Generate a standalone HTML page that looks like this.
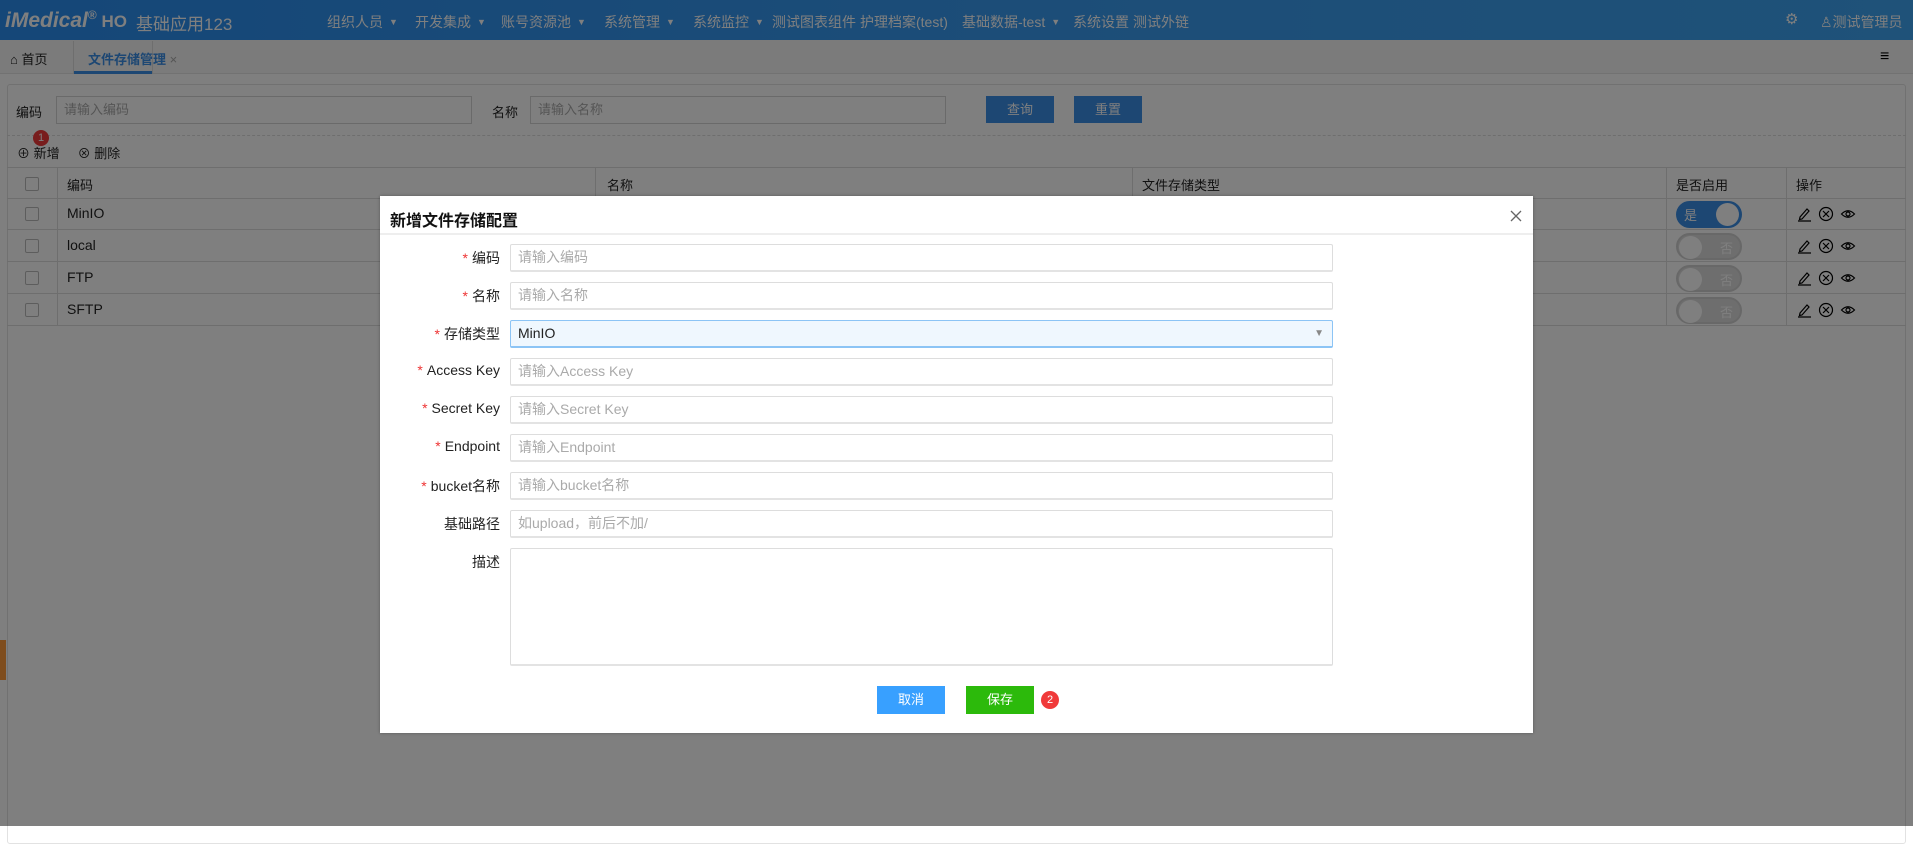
<!DOCTYPE html>
<html><head><meta charset="utf-8"><style>
*{box-sizing:border-box;margin:0;padding:0}
html,body{background:#fff}
body{width:1913px;height:826px;overflow:hidden;position:relative;font-family:"Liberation Sans","Noto Sans CJK SC",sans-serif;font-size:14px;color:#222}
.abs{position:absolute;white-space:nowrap}
.hdr{position:absolute;left:0;top:0;width:1913px;height:40px;background:linear-gradient(90deg,#2a8ef0,#3a9cf0 60%,#3ea4f2)}
.nav{color:#fff;font-size:14px;top:12px}
.tri{font-size:9px;margin-left:6px;vertical-align:2px}
.tabbar{position:absolute;left:0;top:40px;width:1913px;height:34px;background:#f6f6f6;border-bottom:1px solid #e4e4e4}
.panel{position:absolute;left:7px;top:84px;width:1899px;height:760px;border:1px solid #e2e2e2;border-radius:3px;background:#fff}
.inp{position:absolute;height:28px;border:1px solid #d4d4d4;background:#fff;color:#aaa;padding-left:7px;line-height:26px;font-size:13px}
.btn{position:absolute;top:96px;height:27px;width:68px;background:#3b8ee6;color:#fff;text-align:center;line-height:27px;font-size:13px}
.row{position:absolute;left:7px;width:1899px;height:32px;border-bottom:1px solid #dcdcdc}
.cb{position:absolute;left:18px;top:9px;width:14px;height:14px;border:1px solid #bbb;border-radius:2px;background:#fff}
.vl{position:absolute;top:167px;height:159px;width:1px;background:#dcdcdc}
.cell{position:absolute;top:7px;font-size:14px;color:#222}
.sw{position:absolute;left:1669px;top:3px;width:66px;height:27px;border-radius:14px}
.on{background:#3a8ee6}
.off{background:#dcdcdc;border:2px solid #d0d0d0}
.knob{position:absolute;top:2px;width:23px;height:23px;border-radius:50%;background:#fff}
.ov{position:absolute;left:0;top:0;width:1913px;height:826px;background:rgba(0,0,0,.5)}
.modal{position:absolute;left:380px;top:196px;width:1153px;height:537px;background:#fff;box-shadow:0 0 3px rgba(0,0,0,.3)}
.lbl{position:absolute;left:0;width:120px;text-align:right;font-size:14px;color:#222}
.lbl b{color:#e33;font-weight:normal;margin-right:4px}
.fi{position:absolute;left:130px;width:823px;height:28px;border:1px solid #ddd;border-bottom:2px solid #e3e3e3;border-radius:2px;color:#aaa;font-size:14px;padding-left:7px;line-height:25px}
.ops svg{margin-right:6px;vertical-align:middle}
</style></head><body>
<div class="hdr"></div>
<div class="abs" style="left:5px;top:8px;color:#fff;font-size:21px;font-weight:bold;font-style:italic">iMedical<span style="font-size:12px;vertical-align:8px;font-style:normal">®</span><span style="font-style:normal;font-size:17px"> HO</span></div>
<div class="abs" style="left:136px;top:10px;color:#fff;font-size:17px">基础应用123</div>
<div class="abs nav" style="left:327px">组织人员<span class="tri">▼</span></div>
<div class="abs nav" style="left:415px">开发集成<span class="tri">▼</span></div>
<div class="abs nav" style="left:501px">账号资源池<span class="tri">▼</span></div>
<div class="abs nav" style="left:604px">系统管理<span class="tri">▼</span></div>
<div class="abs nav" style="left:693px">系统监控<span class="tri">▼</span></div>
<div class="abs nav" style="left:772px">测试图表组件</div>
<div class="abs nav" style="left:860px">护理档案(test)</div>
<div class="abs nav" style="left:962px">基础数据-test<span class="tri">▼</span></div>
<div class="abs nav" style="left:1073px">系统设置</div>
<div class="abs nav" style="left:1133px">测试外链</div>
<div class="abs nav" style="left:1785px;top:10px;font-size:15px">⚙</div>
<div class="abs nav" style="left:1820px">♙测试管理员</div>

<div class="tabbar"></div>
<div class="abs" style="left:10px;top:49px;font-size:13px;color:#222">⌂ 首页</div>
<div class="abs" style="left:73px;top:41px;width:1px;height:33px;background:#ddd"></div>
<div class="abs" style="left:152px;top:41px;width:1px;height:33px;background:#ddd"></div>
<div class="abs" style="left:88px;top:49px;font-size:13px;color:#3a8ee6;font-weight:bold">文件存储管理 <span style="color:#aaa;font-weight:normal">×</span></div>
<div class="abs" style="left:74px;top:71px;width:78px;height:3px;background:#3a8ee6"></div>
<div class="abs" style="left:1880px;top:48px;font-size:16px;color:#000">≡</div>

<div class="panel"></div>
<div class="abs" style="left:16px;top:102px;font-size:13px">编码</div>
<div class="inp" style="left:56px;top:96px;width:416px">请输入编码</div>
<div class="abs" style="left:492px;top:102px;font-size:13px">名称</div>
<div class="inp" style="left:530px;top:96px;width:416px">请输入名称</div>
<div class="btn" style="left:986px">查询</div>
<div class="btn" style="left:1074px">重置</div>
<div class="abs" style="left:7px;top:135px;width:1899px;border-top:1px dashed #ddd"></div>
<div class="abs" style="left:17px;top:143px;font-size:13px">⊕ 新增 &nbsp;&nbsp;&nbsp; ⊗ 删除</div>
<div class="abs" style="left:33px;top:130px;width:16px;height:16px;border-radius:50%;background:#f03a3a;color:#fff;font-size:11px;text-align:center;line-height:16px">1</div>

<div class="row" style="top:167px;border-top:1px solid #dcdcdc"><div class="cb"></div><div class="cell" style="left:60px;font-size:13px">编码</div><div class="cell" style="left:600px;font-size:13px">名称</div><div class="cell" style="left:1135px;font-size:13px">文件存储类型</div><div class="cell" style="left:1669px;font-size:13px">是否启用</div><div class="cell" style="left:1789px;font-size:13px">操作</div></div>
<div class="row" style="top:198px"><div class="cb"></div><div class="cell" style="left:60px">MinIO</div><div class="sw on"><span class="abs" style="left:8px;top:4px;color:#fff;font-size:13px">是</span><div class="knob" style="left:40px"></div></div></div>
<div class="row" style="top:230px"><div class="cb"></div><div class="cell" style="left:60px">local</div><div class="sw off"><div class="knob" style="left:1px;top:1px"></div><span class="abs" style="left:42px;top:3px;color:#fff;font-size:13px">否</span></div></div>
<div class="row" style="top:262px"><div class="cb"></div><div class="cell" style="left:60px">FTP</div><div class="sw off"><div class="knob" style="left:1px;top:1px"></div><span class="abs" style="left:42px;top:3px;color:#fff;font-size:13px">否</span></div></div>
<div class="row" style="top:294px"><div class="cb"></div><div class="cell" style="left:60px">SFTP</div><div class="sw off"><div class="knob" style="left:1px;top:1px"></div><span class="abs" style="left:42px;top:3px;color:#fff;font-size:13px">否</span></div></div>
<div class="vl" style="left:57px"></div><div class="vl" style="left:595px"></div><div class="vl" style="left:1132px"></div><div class="vl" style="left:1666px"></div><div class="vl" style="left:1786px"></div>
<div class="abs ops" style="left:1796px;top:206px;line-height:0">
<svg width="16" height="16" viewBox="0 0 16 16" fill="none" stroke="#000" stroke-width="1.2"><path d="M4 11 L11 3 L13 5 L6 13 L3.5 13.5 Z M2 15 H15"/></svg><svg width="16" height="16" viewBox="0 0 16 16" fill="none" stroke="#000" stroke-width="1.2"><circle cx="8" cy="8" r="6.5"/><path d="M5 5 L11 11 M11 5 L5 11"/></svg><svg width="16" height="16" viewBox="0 0 16 16" fill="none" stroke="#000" stroke-width="1.2"><path d="M1.5 8 Q8 1.5 14.5 8 Q8 14.5 1.5 8 Z"/><circle cx="8" cy="8" r="2"/></svg>
</div>
<div class="abs ops" style="left:1796px;top:238px;line-height:0">
<svg width="16" height="16" viewBox="0 0 16 16" fill="none" stroke="#000" stroke-width="1.2"><path d="M4 11 L11 3 L13 5 L6 13 L3.5 13.5 Z M2 15 H15"/></svg><svg width="16" height="16" viewBox="0 0 16 16" fill="none" stroke="#000" stroke-width="1.2"><circle cx="8" cy="8" r="6.5"/><path d="M5 5 L11 11 M11 5 L5 11"/></svg><svg width="16" height="16" viewBox="0 0 16 16" fill="none" stroke="#000" stroke-width="1.2"><path d="M1.5 8 Q8 1.5 14.5 8 Q8 14.5 1.5 8 Z"/><circle cx="8" cy="8" r="2"/></svg>
</div>
<div class="abs ops" style="left:1796px;top:270px;line-height:0">
<svg width="16" height="16" viewBox="0 0 16 16" fill="none" stroke="#000" stroke-width="1.2"><path d="M4 11 L11 3 L13 5 L6 13 L3.5 13.5 Z M2 15 H15"/></svg><svg width="16" height="16" viewBox="0 0 16 16" fill="none" stroke="#000" stroke-width="1.2"><circle cx="8" cy="8" r="6.5"/><path d="M5 5 L11 11 M11 5 L5 11"/></svg><svg width="16" height="16" viewBox="0 0 16 16" fill="none" stroke="#000" stroke-width="1.2"><path d="M1.5 8 Q8 1.5 14.5 8 Q8 14.5 1.5 8 Z"/><circle cx="8" cy="8" r="2"/></svg>
</div>
<div class="abs ops" style="left:1796px;top:302px;line-height:0">
<svg width="16" height="16" viewBox="0 0 16 16" fill="none" stroke="#000" stroke-width="1.2"><path d="M4 11 L11 3 L13 5 L6 13 L3.5 13.5 Z M2 15 H15"/></svg><svg width="16" height="16" viewBox="0 0 16 16" fill="none" stroke="#000" stroke-width="1.2"><circle cx="8" cy="8" r="6.5"/><path d="M5 5 L11 11 M11 5 L5 11"/></svg><svg width="16" height="16" viewBox="0 0 16 16" fill="none" stroke="#000" stroke-width="1.2"><path d="M1.5 8 Q8 1.5 14.5 8 Q8 14.5 1.5 8 Z"/><circle cx="8" cy="8" r="2"/></svg>
</div>
<div class="abs" style="left:0;top:640px;width:6px;height:40px;background:#ff9a3a"></div>

<div class="ov"></div>

<div class="modal">
<div class="abs" style="left:10px;top:11px;font-size:16px;font-weight:bold;color:#111">新增文件存储配置</div>
<svg class="abs" style="left:1130px;top:14px" width="12" height="12" viewBox="0 0 12 12" stroke="#666" stroke-width="1.3"><path d="M1 1 L11 11 M11 1 L1 11"/></svg>
<div class="abs" style="left:0;top:37px;width:1153px;height:2px;background:#eee"></div>
<div class="lbl" style="top:52px"><b>*</b>编码</div><div class="fi" style="top:48px">请输入编码</div>
<div class="lbl" style="top:90px"><b>*</b>名称</div><div class="fi" style="top:86px">请输入名称</div>
<div class="lbl" style="top:128px"><b>*</b>存储类型</div><div class="fi" style="top:124px;background:#eff7fe;border:1px solid #8cc4f5;border-bottom:2px solid #8cc4f5;color:#222">MinIO<span class="abs" style="right:8px;top:0;color:#888;font-size:10px">▼</span></div>
<div class="lbl" style="top:166px"><b>*</b>Access Key</div><div class="fi" style="top:162px">请输入Access Key</div>
<div class="lbl" style="top:204px"><b>*</b>Secret Key</div><div class="fi" style="top:200px">请输入Secret Key</div>
<div class="lbl" style="top:242px"><b>*</b>Endpoint</div><div class="fi" style="top:238px">请输入Endpoint</div>
<div class="lbl" style="top:280px"><b>*</b>bucket名称</div><div class="fi" style="top:276px">请输入bucket名称</div>
<div class="lbl" style="top:318px">基础路径</div><div class="fi" style="top:314px">如upload，前后不加/</div>
<div class="lbl" style="top:356px">描述</div><div class="fi" style="top:352px;height:118px"></div>
<div class="abs" style="left:497px;top:490px;width:68px;height:28px;background:#38a0ff;color:#fff;text-align:center;line-height:28px;font-size:13px">取消</div>
<div class="abs" style="left:586px;top:490px;width:68px;height:28px;background:#2cba0b;color:#fff;text-align:center;line-height:28px;font-size:13px">保存</div>
<div class="abs" style="left:661px;top:495px;width:18px;height:18px;border-radius:50%;background:#f03a3a;color:#fff;text-align:center;line-height:18px;font-size:11px">2</div>
</div>
</body></html>
